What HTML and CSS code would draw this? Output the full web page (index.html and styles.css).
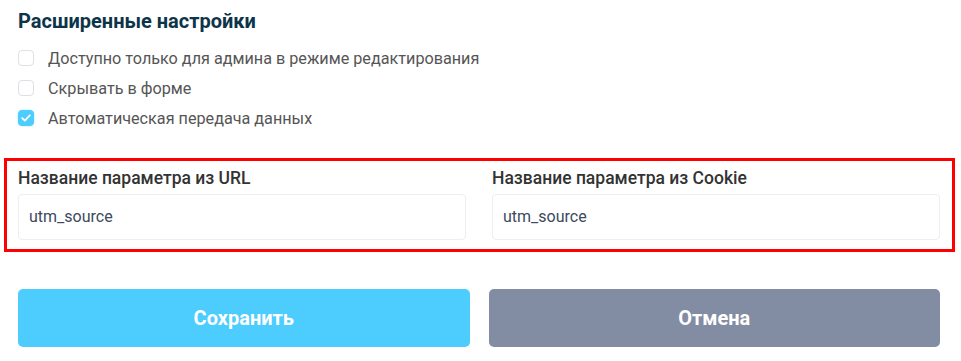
FILE: index.html
```html
<!DOCTYPE html>
<html lang="ru">
<head>
    <meta charset="UTF-8">
    <meta name="viewport" content="width=device-width, initial-scale=1.0">
    <title>Расширенные настройки</title>
    <link rel="stylesheet" href="styles.css">
</head>
<body>
    <div class="container">
        <h2 class="section-title">Расширенные настройки</h2>

        <div class="options">
            <label class="option">
                <span class="checkbox"></span>
                Доступно только для админа в режиме редактирования
            </label>
            <label class="option">
                <span class="checkbox"></span>
                Скрывать в форме
            </label>
            <label class="option">
                <span class="checkbox checked">
                    <svg width="10" height="8" viewBox="0 0 10 8"><path d="M1.2 4.2 L3.8 6.6 L8.8 1.4" fill="none" stroke="#fff" stroke-width="1.8" stroke-linecap="round" stroke-linejoin="round"/></svg>
                </span>
                Автоматическая передача данных
            </label>
        </div>

        <div class="params">
            <div class="field">
                <div class="field-label">Название параметра из URL</div>
                <div class="field-input">utm_source</div>
            </div>
            <div class="field">
                <div class="field-label">Название параметра из Cookie</div>
                <div class="field-input">utm_source</div>
            </div>
        </div>

        <div class="actions">
            <button class="btn btn-save">Сохранить</button>
            <button class="btn btn-cancel">Отмена</button>
        </div>
    </div>
</body>
</html>
```

FILE: styles.css
```css
body {
    font-family: Roboto, "Liberation Sans", sans-serif;
    margin: 0;
    padding: 0;
    background-color: #fff;
}
.container {
    width: 922px;
    padding: 10px 0 0 18px;
}
.section-title {
    margin: 0 0 16px;
    font-size: 20px;
    line-height: 22px;
    font-weight: 700;
    color: #0d3449;
}
.options {
    display: flex;
    flex-direction: column;
    gap: 10px;
}
.option {
    display: flex;
    align-items: center;
    gap: 14px;
    height: 20px;
    font-size: 16.2px;
    color: #555;
}
.checkbox {
    width: 14px;
    height: 14px;
    border: 1px solid #dde0e4;
    border-radius: 4px;
    display: flex;
    align-items: center;
    justify-content: center;
}
.checkbox.checked {
    background-color: #4dcdfe;
    border-color: #4dcdfe;
    box-shadow: 0 0 2px rgba(77, 205, 254, 0.6);
}
.params {
    display: flex;
    gap: 26px;
    margin: 30px -15px 0 -14px;
    padding: 7px 12px 9px 11px;
    border: 3px solid #ff0000;
}
.field {
    flex: 1;
}
.field-label {
    font-size: 17.5px;
    line-height: 20px;
    font-weight: 500;
    color: #333;
    margin-bottom: 6px;
}
.field-input {
    height: 44px;
    line-height: 44px;
    padding: 0 10px;
    border: 1px solid #eceef2;
    border-radius: 4px;
    font-size: 16px;
    color: #3c4a5c;
}
.actions {
    display: flex;
    gap: 19px;
    margin-top: 37px;
}
.btn {
    flex: 1;
    height: 58px;
    border: none;
    border-radius: 5px;
    color: #fff;
    font-family: Roboto, "Liberation Sans", sans-serif;
    font-size: 20px;
    font-weight: 700;
    cursor: pointer;
}
.btn-save {
    background-color: #4dcdfe;
}
.btn-cancel {
    background-color: #828ca3;
}
```
